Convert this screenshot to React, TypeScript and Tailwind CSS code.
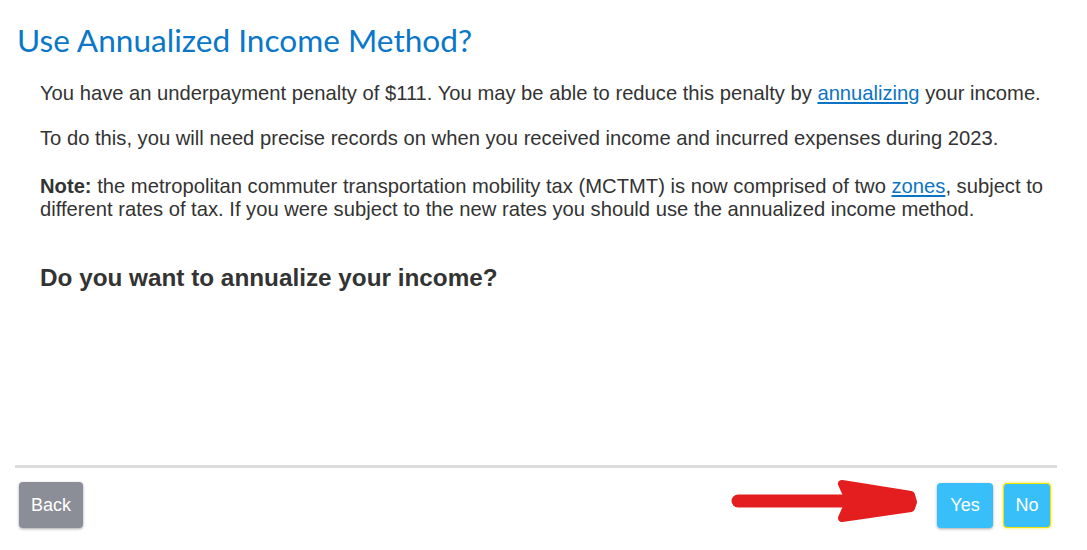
import React from "react";

function Arrow() {
  return (
    <svg
      className="absolute left-[728px] top-[478px]"
      width="192"
      height="48"
      viewBox="0 0 192 48"
    >
      <path
        d="M10 23 L175 23"
        stroke="#e41e1e"
        strokeWidth="13"
        strokeLinecap="round"
        fill="none"
      />
      <path
        d="M114 6 L183 17 L185 24 L183 30 L114 40 L118 31 L130 24 L118 15 Z"
        fill="#e41e1e"
        stroke="#e41e1e"
        strokeWidth="8"
        strokeLinejoin="round"
      />
    </svg>
  );
}

export default function App() {
  return (
    <div className="relative w-[1087px] h-[550px] bg-white font-['Liberation_Sans',Arial,sans-serif] text-[#333]">
      <div className="px-[15px] pt-[20px]">
        <h1 className="pl-[2px] text-[31.6px] leading-[40px] text-[#0a77c8] font-['Lato',sans-serif]">
          Use Annualized Income Method?
        </h1>

        <div className="pl-[25px] pr-[8px] pt-[22px] text-[20.2px] leading-[23px]">
          <p>
            You have an underpayment penalty of $111. You may be able to reduce
            this penalty by{" "}
            <a href="#" className="text-[#0b74c4] underline">
              annualizing
            </a>{" "}
            your income.
          </p>
          <p className="mt-[22px]">
            To do this, you will need precise records on when you received
            income and incurred expenses during 2023.
          </p>
          <p className="mt-[25px]">
            <span className="font-bold">Note:</span> the metropolitan commuter
            transportation mobility tax (MCTMT) is now comprised of two{" "}
            <a href="#" className="text-[#0b74c4] underline">
              zones
            </a>
            , subject to different rates of tax. If you were subject to the new
            rates you should use the annualized income method.
          </p>
          <h2 className="mt-[42px] text-[24.3px] leading-[30px] font-bold">
            Do you want to annualize your income?
          </h2>
        </div>
      </div>

      <div className="absolute left-[15px] right-[30px] top-[465px] h-[3px] bg-[#dddddd]" />

      <div className="absolute left-[19px] right-[36px] top-[482px] flex items-center justify-between">
        <button className="h-[46px] w-[64px] rounded-[4px] bg-[#8b8e97] text-[18px] text-white shadow-[0_1px_3px_rgba(0,0,0,0.35)]">
          Back
        </button>
        <div className="flex gap-[10px]">
          <button className="h-[45px] w-[56px] rounded-[4px] bg-[#38bff9] text-[18px] text-white shadow-[0_1px_3px_rgba(0,0,0,0.35)]">
            Yes
          </button>
          <button className="h-[45px] w-[48px] rounded-[4px] border border-[#f5e400] bg-[#38bff9] text-[18px] text-white shadow-[0_0_3px_rgba(245,228,0,0.8)]">
            No
          </button>
        </div>
      </div>

      <Arrow />
    </div>
  );
}
